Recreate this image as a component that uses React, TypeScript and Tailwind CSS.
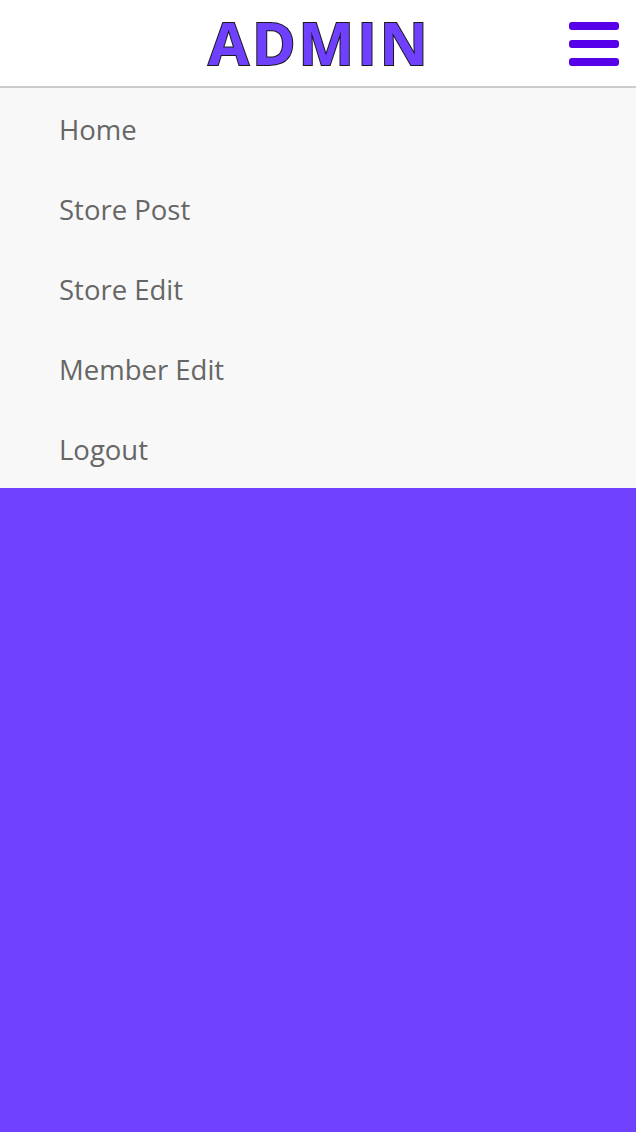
import React from "react";

export default function App() {
  const items = ["Home", "Store Post", "Store Edit", "Member Edit", "Logout"];
  return (
    <div className="min-h-[1132px] flex flex-col bg-[#7040ff]" style={{ fontFamily: '"Open Sans", "Noto Sans", sans-serif' }}>
      <header className="relative h-[88px] bg-white border-b-2 border-[#cccccc] flex items-center justify-center">
        <h1
          className="text-[59px] font-bold tracking-[3px] text-[#7040ff] leading-none pl-[3px] pb-[2px]"
          style={{ WebkitTextStroke: "2px #1a1a1a", paintOrder: "stroke fill" }}
        >
          ADMIN
        </h1>
        <div className="absolute right-[17px] top-[22px] flex flex-col gap-[10px]">
          <span className="block w-[50px] h-[8px] rounded-[3px] bg-[#5500e8]" />
          <span className="block w-[50px] h-[8px] rounded-[3px] bg-[#5500e8]" />
          <span className="block w-[50px] h-[8px] rounded-[3px] bg-[#5500e8]" />
        </div>
      </header>
      <nav className="bg-[#f8f8f8] flex flex-col">
        {items.map((t) => (
          <a key={t} className="h-[80px] flex items-center pl-[59px] pt-[3px] text-[27.5px] text-[#666666]">
            {t}
          </a>
        ))}
      </nav>
      <div className="flex-1 bg-[#7040ff]" />
    </div>
  );
}
